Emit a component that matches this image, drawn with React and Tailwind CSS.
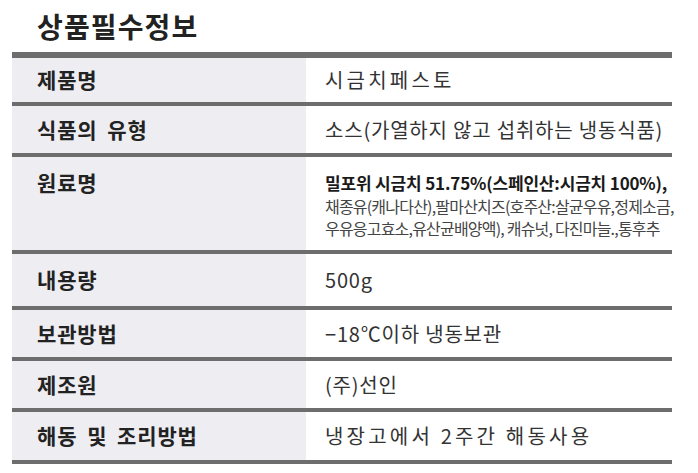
import React from "react";

const rows = [
  { label: "제품명", value: "시금치페스토", h: "h-[48px]", wide: true },
  { label: "식품의 유형", value: "소스(가열하지 않고 섭취하는 냉동식품)", h: "h-[51px]" },
  { label: "원료명", h: "h-[97px]", raw: true },
  { label: "내용량", value: "500g", h: "h-[56px]" },
  { label: "보관방법", value: "−18℃이하 냉동보관", h: "h-[51px]" },
  { label: "제조원", value: "(주)선인", h: "h-[51px]" },
  { label: "해동 및 조리방법", value: "냉장고에서 2주간 해동사용", h: "h-[52px]", wide: true },
];

const App = () => {
  return (
    <div className="w-[698px] h-[473px] bg-white font-['Noto_Sans_CJK_KR','Noto_Sans',sans-serif] text-[#333]">
      <h1 className="pl-[37px] pt-[6px] h-[52px] text-[28px] tracking-[0.04em] font-bold text-[#222] leading-[40px]">
        상품필수정보
      </h1>

      <div className="ml-[12px] w-[660px] border-t-[6px] border-[#6d6d6d]">
        {rows.map((row) => (
          <div
            key={row.label}
            className={`grid grid-cols-[294px_1fr] border-b-4 border-[#6d6d6d] ${row.h}`}
          >
            <div
              className={`bg-[#ededf2] pl-[25px] flex text-[21px] font-bold text-[#222] whitespace-pre tracking-[0.04em] [word-spacing:0.2em] ${
                row.raw ? "items-start pt-[10px]" : "items-center"
              }`}
            >
              {row.label}
            </div>
            {row.raw ? (
              <div className="pl-[19px] pt-[13px] whitespace-nowrap">
                <div className="text-[17px] leading-[25px] font-bold text-[#1a1a1a] tracking-[-0.01em]">
                  밀포위 시금치 51.75%(스페인산:시금치 100%),
                </div>
                <div className="text-[16px] leading-[22px] text-[#444] tracking-[-0.05em]">
                  채종유(캐나다산),팔마산치즈(호주산:살균우유,정제소금,
                </div>
                <div className="text-[16px] leading-[22px] text-[#444] tracking-[-0.05em]">
                  우유응고효소,유산균배양액), 캐슈넛, 다진마늘.,통후추
                </div>
              </div>
            ) : (
              <div
                className={`pl-[19px] flex items-center text-[20px] text-[#333] whitespace-nowrap ${
                  row.wide ? "tracking-[0.16em]" : "tracking-[0.04em]"
                }`}
              >
                {row.value}
              </div>
            )}
          </div>
        ))}
      </div>
    </div>
  );
};

export default App;
